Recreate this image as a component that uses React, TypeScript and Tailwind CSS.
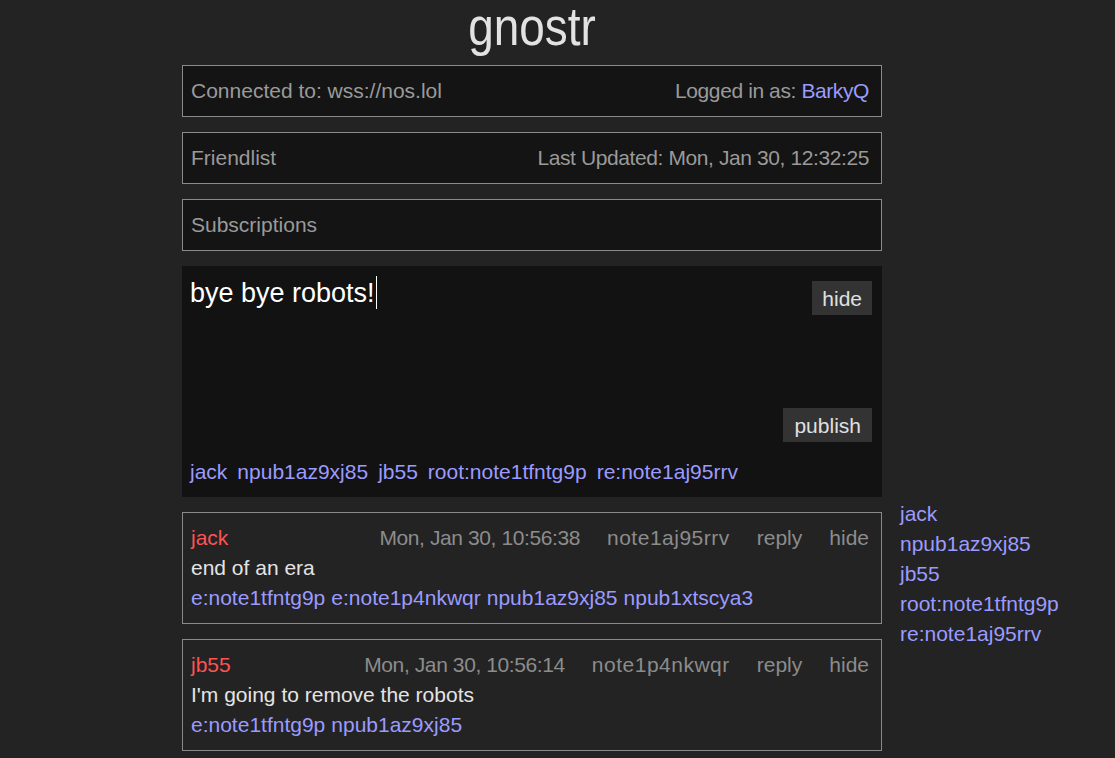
import React from 'react'

const font = "font-['Liberation_Sans',Arial,sans-serif]"

interface Post {
  author: string
  time: string
  id: string
  text: string
  tags: string[]
}

const posts: Post[] = [
  {
    author: 'jack',
    time: 'Mon, Jan 30, 10:56:38',
    id: 'note1aj95rrv',
    text: 'end of an era',
    tags: ['e:note1tfntg9p', 'e:note1p4nkwqr', 'npub1az9xj85', 'npub1xtscya3'],
  },
  {
    author: 'jb55',
    time: 'Mon, Jan 30, 10:56:14',
    id: 'note1p4nkwqr',
    text: "I'm going to remove the robots",
    tags: ['e:note1tfntg9p', 'npub1az9xj85'],
  },
]

const replyTags = ['jack', 'npub1az9xj85', 'jb55', 'root:note1tfntg9p', 're:note1aj95rrv']

const InfoBox = ({ left, right }: { left: string; right?: React.ReactNode }) => (
  <div className="h-[52px] flex items-center justify-between border border-[#8a8a8a] bg-[#141414] pl-2 pr-3 text-[#9a9a9a]">
    <span>{left}</span>
    {right && <span className="tracking-[-0.4px]">{right}</span>}
  </div>
)

const PostCard = ({ post }: { post: Post }) => (
  <div className="border border-[#8a8a8a] pl-2 pr-3 py-[10px] leading-[30px]">
    <div className="flex justify-between">
      <span className="text-[#ff5252]">{post.author}</span>
      <div className="flex gap-[27px] text-[#8c8c8c]">
        <span className="tracking-[-0.4px]">{post.time}</span>
        <span className="tracking-[0.5px]">{post.id}</span>
        <span>reply</span>
        <span>hide</span>
      </div>
    </div>
    <div className="text-[#e4e4e4]">{post.text}</div>
    <div className="flex gap-[6px] text-[#9b9bff]">
      {post.tags.map((t) => (
        <span key={t}>{t}</span>
      ))}
    </div>
  </div>
)

export default function App() {
  return (
    <div className={`min-h-screen bg-[#232323] ${font} text-[21px] pl-[182px] flex items-start`}>
      <div className="w-[700px] flex flex-col gap-[15px]">
        <div className="h-[50px] pt-[2px] flex justify-center text-[54px] leading-[48px] text-[#e2e2e2]">
          <span className="inline-block scale-x-[0.85]">gnostr</span>
        </div>

        <InfoBox
          left="Connected to: wss://nos.lol"
          right={
            <>
              Logged in as: <span className="text-[#9b9bff]">BarkyQ</span>
            </>
          }
        />
        <InfoBox left="Friendlist" right="Last Updated: Mon, Jan 30, 12:32:25" />
        <InfoBox left="Subscriptions" />

        <div className="bg-[#121212] pl-2 pr-[10px] pt-[15px] pb-[10px] flex flex-col">
          <div className="h-[34px] flex justify-between items-start">
            <div className="flex items-start text-[27px] leading-[24px] text-white">
              <span>bye bye robots!</span>
              <span className="ml-[1px] -mt-[5px] w-px h-[33px] bg-white" />
            </div>
            <button className="h-[34px] px-[10px] bg-[#333333] text-[#e0e0e0] leading-none">hide</button>
          </div>
          <div className="mt-[93px] flex justify-end">
            <button className="h-[34px] px-[11px] bg-[#333333] text-[#e0e0e0] leading-none">publish</button>
          </div>
          <div className="mt-[15px] h-[30px] leading-[30px] flex gap-[10px] text-[#9b9bff]">
            {replyTags.map((t) => (
              <span key={t}>{t}</span>
            ))}
          </div>
        </div>

        {posts.map((p) => (
          <PostCard key={p.id} post={p} />
        ))}
      </div>

      <div className="ml-[18px] mt-[499px] flex flex-col leading-[30px] text-[#9b9bff]">
        {replyTags.map((t) => (
          <span key={t}>{t}</span>
        ))}
      </div>
    </div>
  )
}
